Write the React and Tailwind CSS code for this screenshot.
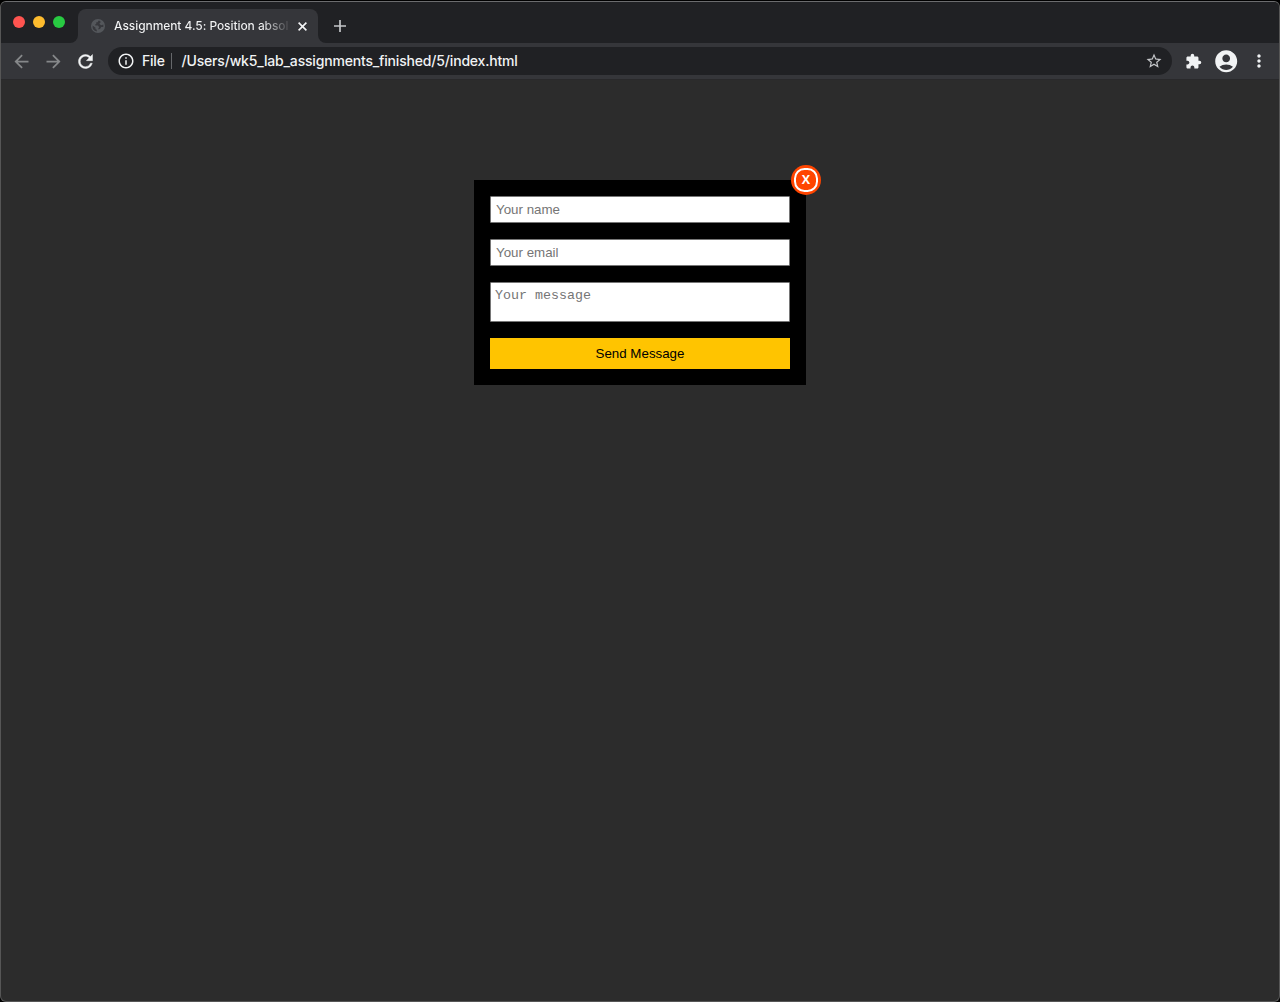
import React from "react";
import {
  MdAccountCircle,
  MdArrowBack,
  MdArrowForward,
  MdExtension,
  MdInfoOutline,
  MdMoreVert,
  MdStarBorder,
} from "react-icons/md";

function Globe() {
  return (
    <svg className="h-[14px] w-[14px] shrink-0" viewBox="0 0 14 14">
      <circle cx="7" cy="7" r="7" fill="#54575b" />
      <path
        fill="#37383c"
        d="M7.6 1.6 6.6 3.2 5 3.6 5.4 5 4 5.6 4.4 6.6H7L8.2 8.2 7.4 9.2V10.6L9.2 9.8 10.2 8H12.3A5.5 5.5 0 0 0 12.3 5.6L10.4 6.2 9 5.6 8.4 4.4 9.6 3.4 9.2 2ZM1.6 6.4A5.5 5.5 0 0 0 5.8 12.4V10.8L4.4 10 4.6 8.8Z"
      />
    </svg>
  );
}

function Reload() {
  return (
    <svg className="ml-[11px] h-[21px] w-[21px] shrink-0" viewBox="0 0 24 24" fill="currentColor">
      <path
        stroke="currentColor"
        strokeWidth="0.5"
        d="M17.65 6.35A7.958 7.958 0 0 0 12 4c-4.42 0-7.99 3.58-7.99 8s3.57 8 7.99 8c3.73 0 6.84-2.55 7.73-6h-2.08A5.99 5.99 0 0 1 12 18c-3.31 0-6-2.69-6-6s2.69-6 6-6c1.66 0 3.14.69 4.22 1.78L13 11h7V4l-2.35 2.35z"
      />
    </svg>
  );
}

function TabStrip() {
  return (
    <div className="flex h-[41px] shrink-0 bg-[#202124]">
      <div className="ml-3 flex h-10 w-[57px] items-center gap-2">
        <span className="h-3 w-3 rounded-full bg-[#ff5450]" />
        <span className="h-3 w-3 rounded-full bg-[#febc2e]" />
        <span className="h-3 w-3 rounded-full bg-[#28ca42]" />
      </div>
      <div className="flex w-2 items-end bg-[#35363a]">
        <span className="h-[41px] w-2 rounded-br-lg bg-[#202124]" />
      </div>
      <div className="mt-[7px] flex h-[34px] w-[240px] items-center rounded-t-lg bg-[#35363a] pl-[13px]">
        <Globe />
        <div className="ml-[9px] bg-linear-to-r from-[#f4f5f6] from-84% to-[#45464a] bg-clip-text text-[12px] leading-4 font-medium tracking-[-0.07px] whitespace-nowrap text-transparent">
          Assignment 4.5: Position absol
        </div>
        <svg
          className="mr-[11.5px] ml-auto h-[9px] w-[9px] shrink-0"
          viewBox="0 0 9 9"
          stroke="#f4f5f6"
          strokeWidth="1.6"
        >
          <path d="M0.6 0.6 8.4 8.4M8.4 0.6 0.6 8.4" />
        </svg>
      </div>
      <div className="flex w-2 items-end bg-[#35363a]">
        <span className="h-[41px] w-2 rounded-bl-lg bg-[#202124]" />
      </div>
      <svg className="mt-[18px] ml-2 h-3 w-3" viewBox="0 0 12 12" stroke="#c4c6c9" strokeWidth="1.7">
        <path d="M6 0v12M0 6h12" />
      </svg>
    </div>
  );
}

function Toolbar() {
  return (
    <div className="flex h-[37px] shrink-0 items-center border-b border-[#29292b] bg-[#35363a] text-[#f1f3f4]">
      <MdArrowBack size={21} className="ml-[10.4px] shrink-0 text-[#86888a]" />
      <MdArrowForward size={21} className="ml-[11px] shrink-0 text-[#86888a]" />
      <Reload />
      <div className="ml-[11.6px] flex h-7 w-[1064px] shrink-0 items-center rounded-full bg-[#202124] pr-[9px] pl-[9px] text-[14px] leading-5">
        <MdInfoOutline size={18} className="shrink-0" />
        <span className="ml-[7px] w-[24px] font-medium tracking-[-0.2px]">File</span>
        <span className="ml-[5px] h-4 w-px bg-[#66686b]" />
        <span className="ml-[9.5px] font-medium tracking-[-0.18px] whitespace-nowrap">
          /Users/wk5_lab_assignments_finished/5/index.html
        </span>
        <MdStarBorder size={18} className="ml-auto shrink-0 text-[#c4c6c9]" />
      </div>
      <MdExtension size={17} className="ml-[13.4px] shrink-0" />
      <MdAccountCircle size={26.4} className="ml-[10.6px] shrink-0" />
      <MdMoreVert size={20} className="ml-[9.4px] shrink-0" />
    </div>
  );
}

const field =
  "block w-full resize-none rounded-[1px] border border-[#767676] bg-white outline-none placeholder:text-[#757575] placeholder:opacity-100";

function ContactForm() {
  return (
    <form className="relative mx-auto mt-[100px] flex h-[205px] w-[332px] flex-col gap-4 bg-black p-4 font-['Liberation_Sans',Arial,sans-serif] text-[13.333px]">
      <input className={`${field} h-[27px] px-[5px] leading-[15px]`} placeholder="Your name" />
      <input className={`${field} h-[27px] px-[5px] leading-[15px]`} placeholder="Your email" />
      <textarea
        className={`${field} h-10 overflow-hidden px-1 py-[5px] font-['Liberation_Mono','Courier_New',monospace] leading-[15px]`}
        placeholder="Your message"
      />
      <button type="button" className="h-[31px] w-full bg-[#ffc400] leading-[15px] text-black">
        Send Message
      </button>
      <button
        type="button"
        className="absolute -top-[15px] -right-[15px] flex h-[30px] w-[30px] items-center justify-center rounded-full bg-[#ff4500]"
      >
        <span className="flex h-6 w-6 items-center justify-center rounded-[10.5px] border-2 border-white font-['Open_Sans',sans-serif] text-[12.5px] leading-none font-bold text-white">
          X
        </span>
      </button>
    </form>
  );
}

export default function App() {
  return (
    <div className="h-[1002px] w-[1280px] overflow-hidden bg-black pt-px font-['Inter',sans-serif]">
      <div className="flex h-[1001px] flex-col overflow-hidden rounded-[6px] border border-[#565656] border-t-[#6b6c6e] bg-[#2c2c2c]">
        <TabStrip />
        <Toolbar />
        <main className="flex flex-1 flex-col">
          <ContactForm />
        </main>
      </div>
    </div>
  );
}
